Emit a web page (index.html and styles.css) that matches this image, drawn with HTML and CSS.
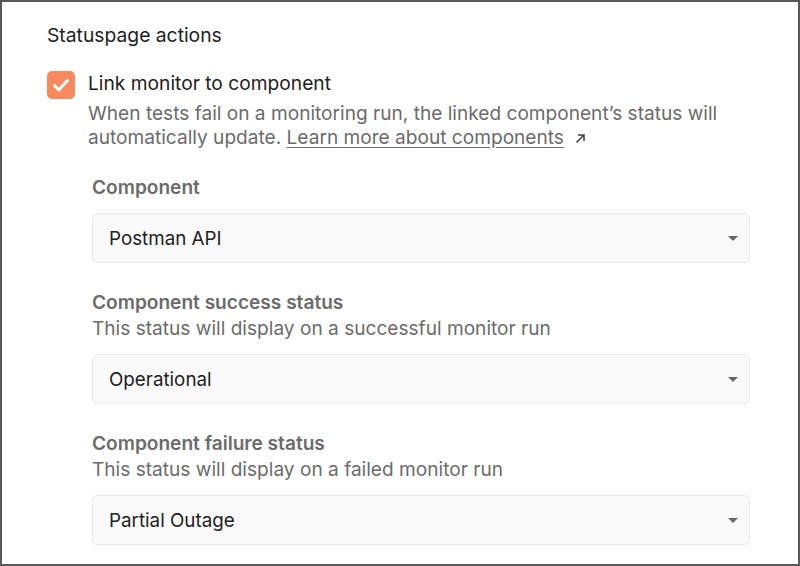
FILE: index.html
```html
<!DOCTYPE html>
<html>
<head>
<meta charset="utf-8">
<link rel="stylesheet" href="styles.css">
</head>
<body>
<div class="frame">
  <h2 class="title">Statuspage actions</h2>
  <div class="check-row">
    <span class="checkbox">
      <svg width="28" height="28" viewBox="0 0 28 28"><path d="M7.5 14.5 L12 18.8 L20.5 9.5" fill="none" stroke="#fff" stroke-width="3" stroke-linecap="round" stroke-linejoin="round"/></svg>
    </span>
    <div class="check-text">
      <div class="check-label">Link monitor to component</div>
      <p class="check-desc">When tests fail on a monitoring run, the linked component’s status will automatically update. <a class="link" href="#">Learn more about components</a><svg class="ext" width="13" height="13" viewBox="0 0 13 13"><path d="M2.5 10.5 L10 3 M4 3 H10 V9" fill="none" stroke="#444" stroke-width="1.6"/></svg></p>
    </div>
  </div>
  <div class="fields">
    <div class="field">
      <div class="field-label">Component</div>
      <div class="select"><span>Postman API</span><span class="caret"></span></div>
    </div>
    <div class="field">
      <div class="field-label">Component success status</div>
      <div class="field-desc">This status will display on a successful monitor run</div>
      <div class="select"><span>Operational</span><span class="caret"></span></div>
    </div>
    <div class="field">
      <div class="field-label">Component failure status</div>
      <div class="field-desc">This status will display on a failed monitor run</div>
      <div class="select"><span>Partial Outage</span><span class="caret"></span></div>
    </div>
  </div>
</div>
</body>
</html>
```

FILE: styles.css
```css
* { box-sizing: border-box; }
html, body { margin: 0; padding: 0; background: #fff; }
body { font-family: Inter, "Noto Sans", sans-serif; color: #212121; }
.frame {
  width: 800px;
  height: 566px;
  border: 2px solid #595959;
  padding: 21px 48px 0 45px;
  overflow: hidden;
}
.title {
  margin: 0;
  font-size: 19.3px;
  font-weight: 400;
  line-height: 24px;
  color: #212121;
}
.check-row {
  display: flex;
  gap: 13px;
  margin-top: 23px;
}
.checkbox {
  flex: none;
  width: 28px;
  height: 28px;
  border-radius: 5px;
  background: #f6895e;
  display: flex;
  align-items: center;
  justify-content: center;
  margin-top: 1px;
}
.check-label {
  font-size: 19.2px;
  line-height: 26px;
  color: #212121;
}
.check-desc {
  margin: 5px 0 0;
  font-size: 19.1px;
  line-height: 24px;
  color: #6b6b6b;
}
.link { color: #6b6b6b; text-decoration: underline; text-underline-offset: 3px; }
.ext { vertical-align: -1px; margin-left: 10px; }
.fields {
  padding-left: 45px;
  margin-top: 25px;
}
.field { margin-bottom: 26px; }
.field-label {
  font-size: 19.1px;
  font-weight: 600;
  line-height: 26px;
  color: #6b6b6b;
}
.field-desc {
  font-size: 19.1px;
  line-height: 26px;
  color: #6b6b6b;
}
.select {
  margin-top: 13px;
  height: 50px;
  background: #f9f9f9;
  border: 1px solid #ebebeb;
  border-radius: 5px;
  display: flex;
  align-items: center;
  justify-content: space-between;
  padding: 0 11px 0 16px;
  font-size: 18.8px;
  color: #212121;
}
.caret {
  width: 0;
  height: 0;
  border-left: 5px solid transparent;
  border-right: 5px solid transparent;
  border-top: 5px solid #666;
}
```
